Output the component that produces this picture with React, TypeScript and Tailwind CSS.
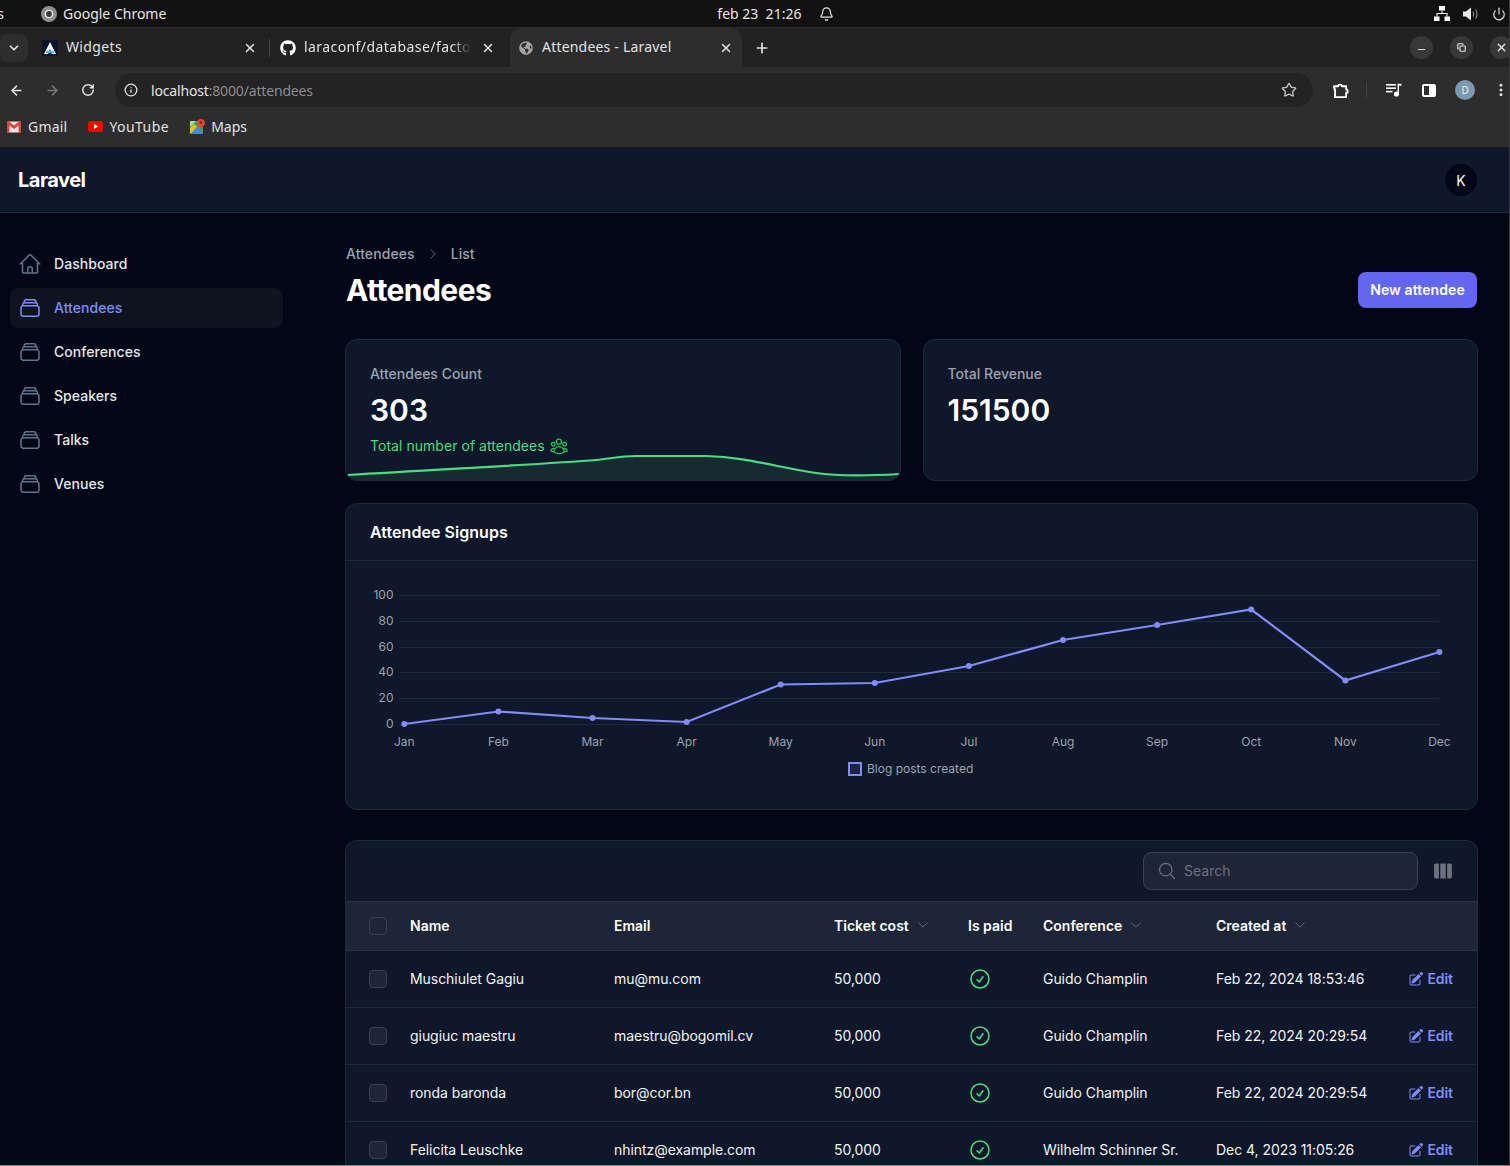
import React from "react";
import { HiOutlineHome, HiOutlineRectangleStack, HiOutlineUserGroup, HiOutlineCheckCircle, HiPencilSquare, HiViewColumns, HiOutlineMagnifyingGlass, HiOutlineChevronDown, HiOutlineChevronRight } from "react-icons/hi2";
import { FaGithub, FaGlobeAmericas } from "react-icons/fa";
import { ArrowLeft, ArrowRight, RotateCw, Info, Star, EllipsisVertical, X, Plus, ChevronDown, Minus, Copy, Power, Bell } from "lucide-react";

const nav = ["Dashboard", "Attendees", "Conferences", "Speakers", "Talks", "Venues"];
const rows = [
  ["Muschiulet Gagiu", "mu@mu.com", "Guido Champlin", "Feb 22, 2024 18:53:46"],
  ["giugiuc maestru", "maestru@bogomil.cv", "Guido Champlin", "Feb 22, 2024 20:29:54"],
  ["ronda baronda", "bor@cor.bn", "Guido Champlin", "Feb 22, 2024 20:29:54"],
  ["Felicita Leuschke", "nhintz@example.com", "Wilhelm Schinner Sr.", "Dec 4, 2023 11:05:26"],
];
const months = ["Jan", "Feb", "Mar", "Apr", "May", "Jun", "Jul", "Aug", "Sep", "Oct", "Nov", "Dec"];
const ys = [163, 150.5, 157, 161, 123.5, 122, 105, 79, 64, 48.5, 119.5, 91];
const ticks: [string, number][] = [["100", 34], ["80", 60], ["60", 86], ["40", 111], ["20", 137], ["0", 163]];
const xOf = (i: number) => 58.3 + i * 94.1;

function Chart() {
  const pts = ys.map((y, i) => `${xOf(i)},${y}`).join(" ");
  return (
    <svg width="1131" height="249" viewBox="0 0 1131 249" className="block">
      {ticks.map(([t, y]) => (
        <g key={t}>
          <line x1="53" x2="1093" y1={y + 0.5} y2={y + 0.5} stroke="#1e293b" />
          <text x="47.5" y={y + 4} textAnchor="end" fontSize="12" fill="#9ca3af">{t}</text>
        </g>
      ))}
      <polyline points={pts} fill="none" stroke="#818cf8" strokeWidth="2.2" />
      {ys.map((y, i) => <circle key={i} cx={xOf(i)} cy={y} r="3" fill="#818cf8" />)}
      {months.map((m, i) => (
        <text key={m} x={xOf(i)} y="185" textAnchor="middle" fontSize="12" fill="#9ca3af">{m}</text>
      ))}
      <rect x="503" y="202" width="12" height="12" fill="#1e2547" stroke="#818cf8" strokeWidth="2" />
      <text x="521" y="212" fontSize="12" fill="#9ca3af">Blog posts created</text>
    </svg>
  );
}

function Spark() {
  const d = "M2 136 C 100 130, 200 125, 250 121 C 265 119.5, 275 117, 290 117 L 360 117 C 400 118, 430 128, 470 134 C 490 137, 520 137, 553 135";
  return (
    <svg width="556" height="30" viewBox="0 0 556 30" preserveAspectRatio="none" className="absolute left-0 bottom-0">
      <g transform="translate(0,-111)">
        <path d={d + " L 553 141 L 2 141 Z"} fill="#172a32" />
        <path d={d} fill="none" stroke="#4ade80" strokeWidth="2.2" />
      </g>
    </svg>
  );
}

function Check() {
  return <span className="block w-[18px] h-[18px] rounded-[4px] bg-[#1e2536] border border-[#374151]" />;
}

function Sort({ label }: { label: string }) {
  return (
    <span className="inline-flex items-center gap-[7px]">
      {label}
      <HiOutlineChevronDown className="w-[14px] h-[14px] text-[#6b7280]" />
    </span>
  );
}

function MapsIcon() {
  return (
    <svg width="15" height="15" viewBox="0 0 15 15" className="block">
      <rect x="0" y="2" width="13" height="13" fill="#34a853" />
      <path d="M0 15 L7 8 L13 14 V15 Z" fill="#4285f4" />
      <path d="M0 15 L7 8 L4 5 L0 9 Z" fill="#fbbc04" />
      <path d="M0 2 H6 L0 8 Z" fill="#a8dab5" />
      <path d="M11 0 C13.2 0 15 1.6 15 3.6 C15 6 12.4 7.6 11 10 C9.6 7.6 7 6 7 3.6 C7 1.6 8.8 0 11 0 Z" fill="#ea4335" />
      <circle cx="11" cy="3.6" r="1.3" fill="#7b1c14" />
    </svg>
  );
}

function GmailIcon() {
  return (
    <svg width="14" height="12" viewBox="0 0 14 12" className="block">
      <rect x="0" y="0.5" width="14" height="11" rx="1" fill="#e8e4e2" />
      <path d="M0 1.5 C0 0.5 1 0 2 0.6 L7 4.6 L12 0.6 C13 0 14 0.5 14 1.5 V11 C14 11.5 13.6 12 13 12 H11.6 V4.4 L7 8 L2.4 4.4 V12 H1 C0.4 12 0 11.5 0 11 Z" fill="#d9473b" />
    </svg>
  );
}

function YoutubeIcon() {
  return (
    <svg width="15" height="11" viewBox="0 0 15 11" className="block">
      <rect width="15" height="11" rx="2.6" fill="#f00" />
      <path d="M6 3 L10 5.5 L6 8 Z" fill="#fff" />
    </svg>
  );
}

function NetworkIcon() {
  return (
    <svg width="16" height="15" viewBox="0 0 16 15" className="block" fill="#fff">
      <rect x="5" y="0" width="6" height="4.5" />
      <rect x="0" y="10.5" width="5.5" height="4.5" />
      <rect x="10.5" y="10.5" width="5.5" height="4.5" />
      <path d="M7.5 4.5 H8.5 V7 H13.5 V10.5 H12.5 V8 H3.5 V10.5 H2.5 V7 H7.5 Z" />
    </svg>
  );
}

function SpeakerIcon() {
  return (
    <svg width="16" height="14" viewBox="0 0 16 14" className="block" fill="none">
      <path d="M0 4.5 H3 L8 0.5 V13.5 L3 9.5 H0 Z" fill="#e8e8e8" />
      <path d="M10 4.5 C11 6 11 8 10 9.5 M12.5 2.5 C14.5 5 14.5 9 12.5 11.5" stroke="#8f8f8f" strokeWidth="1.1" />
    </svg>
  );
}

function ChromeDisc() {
  return (
    <svg width="16" height="16" viewBox="0 0 16 16" className="block ml-[41px]">
      <circle cx="8" cy="8" r="8" fill="#8e8e8e" />
      <circle cx="8" cy="8" r="3.6" fill="#3a3a3a" stroke="#f0f0f0" strokeWidth="1.4" />
    </svg>
  );
}

function ExtensionIcon() {
  return (
    <svg width="17" height="17" viewBox="0 0 18 18" className="block ml-[19px]" fill="none" stroke="#fff" strokeWidth="2" strokeLinejoin="round">
      <path d="M2 4.5 H6.5 C6.2 2.2 10.8 2.2 10.5 4.5 H15 V8 C17.2 8 17.2 11.5 15 11.5 V16 H3 C3.5 13 3.5 8 2 4.5 Z" />
    </svg>
  );
}

function QueueIcon() {
  return (
    <svg width="16" height="14" viewBox="0 0 16 14" className="block ml-[19px]" fill="#fff">
      <rect x="0" y="1" width="10" height="1.6" />
      <rect x="0" y="4.4" width="10" height="1.6" />
      <rect x="0" y="7.8" width="6.5" height="1.6" />
      <circle cx="10.5" cy="11" r="2.6" />
      <path d="M11.6 11 V0.8 H15.5 V2.8 H13 V11 Z" />
    </svg>
  );
}

function ChromeBar() {
  return (
    <div className="shrink-0 font-['Noto_Sans',sans-serif]">
      <div className="h-[27px] bg-[#111111] text-[#e8e8e8] text-[14px] relative flex items-center">
        <span className="absolute left-0 w-[4px] overflow-hidden whitespace-nowrap flex justify-end">s</span>
        <ChromeDisc />
        <span className="ml-[6px]">Google Chrome</span>
        <span className="ml-[551px]">feb 23&nbsp; 21:26</span>
        <Bell className="ml-[18px] w-[15px] h-[16px]" />
        <div className="ml-auto flex items-center gap-[13px] pr-[3px]">
          <NetworkIcon />
          <SpeakerIcon />
          <Power className="w-[14px] h-[14px]" />
        </div>
      </div>
      <div className="h-[40px] bg-[#222222] flex items-center text-[14px] text-[#e3e3e3] border-t border-[#2e2e2e]">
        <div className="w-[28px] h-[28px] bg-[#2e2e2e] rounded-lg flex items-center justify-center">
          <ChevronDown className="w-[14px] h-[14px]" strokeWidth={3} />
        </div>
        <svg width="16" height="16" viewBox="0 0 16 16" className="ml-[14px] bg-[#0a1530]">
          <path d="M8 2 L14 14 H10 L8 9 L6 14 H2 Z" fill="#f0f4ff" />
          <path d="M4 11 H12 V13 H4 Z" fill="#38bdf8" />
        </svg>
        <span className="ml-[8px] w-[175px] tracking-[0.35px] pb-[2px]">Widgets</span>
        <X className="w-[14px] h-[14px] ml-[2px]" strokeWidth={2.5} />
        <span className="w-px h-[18px] bg-[#444] ml-[12px]" />
        <FaGithub className="ml-[10px] w-[16px] h-[16px] text-white" />
        <span className="ml-[8px] w-[172px] tracking-[0.42px] pb-[2px] whitespace-nowrap [mask-image:linear-gradient(90deg,black_86%,transparent_97%)]">laraconf/database/facto</span>
        <X className="w-[14px] h-[14px] ml-[5px]" strokeWidth={2.5} />
        <div className="ml-[15px] w-[232px] h-[40px] bg-[#2d2d2d] rounded-t-xl flex items-center">
          <FaGlobeAmericas className="ml-[9px] w-[14px] h-[14px] text-[#a5a5a5]" />
          <span className="ml-[9px] w-[175px] pb-[2px] tracking-[0.2px]">Attendees - Laravel</span>
          <X className="w-[14px] h-[14px] ml-[2px]" strokeWidth={2.5} />
        </div>
        <Plus className="ml-[12px] w-[16px] h-[16px]" strokeWidth={2.5} />
        <div className="ml-auto flex items-center gap-[17px] mr-[-4px]">
          <span className="w-[23px] h-[23px] rounded-full bg-[#383838] flex items-center justify-center"><Minus className="w-[11px] h-[11px] mt-[3px]" /></span>
          <span className="w-[23px] h-[23px] rounded-full bg-[#383838] flex items-center justify-center"><Copy className="w-[9px] h-[9px]" strokeWidth={3} /></span>
          <span className="w-[23px] h-[23px] rounded-full bg-[#383838] flex items-center justify-center"><X className="w-[13px] h-[13px]" strokeWidth={2.5} /></span>
        </div>
      </div>
      <div className="h-[40px] pt-[6px] bg-[#2d2d2d] flex items-center text-[#e3e3e3]">
        <ArrowLeft className="ml-[9px] w-[15px] h-[15px]" strokeWidth={2.5} />
        <ArrowRight className="ml-[21px] w-[15px] h-[15px] text-[#777]" strokeWidth={2.5} />
        <RotateCw className="ml-[21px] w-[14px] h-[14px]" strokeWidth={2.5} />
        <div className="ml-[20px] w-[1200px] h-[34px] rounded-full bg-[#232323] flex items-center text-[14px]">
          <Info className="ml-[9px] w-[14px] h-[14px]" strokeWidth={2.2} />
          <span className="ml-[13px] tracking-[-0.16px]">localhost<span className="text-[#8d8d8d]">:8000/attendees</span></span>
          <Star className="ml-auto mr-[16px] w-[16px] h-[16px] text-[#c4c4c4]" strokeWidth={2} />
        </div>
        <ExtensionIcon />
        <span className="ml-[17px] w-px h-[16px] bg-[#444]" />
        <QueueIcon />
        <span className="ml-[20px] w-[14px] h-[13px] rounded-[2px] border-2 border-white bg-[linear-gradient(90deg,transparent_50%,white_50%)]" />
        <span className="ml-[19px] w-[20px] h-[20px] rounded-full bg-[#7b9aad] text-[10px] text-[#e8eef2] flex items-center justify-center">D</span>
        <EllipsisVertical className="ml-[18px] w-[16px] h-[16px]" strokeWidth={2.5} />
      </div>
      <div className="h-[41px] bg-[#2d2d2d] flex items-center text-[14px] text-[#e3e3e3] pb-[1px] border-b border-[#1a1a1a]">
        <span className="ml-[7px]"><GmailIcon /></span>
        <span className="ml-[7px] tracking-[0.2px]">Gmail</span>
        <span className="ml-[21px]"><YoutubeIcon /></span>
        <span className="ml-[6px] tracking-[0.45px]">YouTube</span>
        <span className="ml-[21px]"><MapsIcon /></span>
        <span className="ml-[6px]">Maps</span>
      </div>
    </div>
  );
}

const textCell = "pb-[2px]";

export default function App() {
  return (
    <div className="w-[1510px] h-[1166px] overflow-hidden flex flex-col bg-[#020617] font-['Inter',sans-serif] text-white border-r border-b border-r-[#3a3a3a] border-b-[#d9606a]">
      <ChromeBar />
      <header className="shrink-0 h-[65px] bg-[#0f172a] border-b border-[#1e293b] flex items-center justify-between pl-[18px] pr-[32px]">
        <span className="text-[20px] font-bold tracking-[-0.5px]">Laravel</span>
        <span className="w-[32px] h-[32px] rounded-full bg-[#020617] text-[14px] flex items-center justify-center">K</span>
      </header>
      <div className="flex-1 flex min-h-0">
        <aside className="w-[293px] shrink-0 pl-[10px] pr-[10px] pt-[31px]">
          <ul className="flex flex-col gap-[4px]">
            {nav.map((n) => {
              const active = n === "Attendees";
              const Icon = n === "Dashboard" ? HiOutlineHome : HiOutlineRectangleStack;
              return (
                <li key={n} className={`h-[40px] rounded-lg flex items-center pl-[10px] gap-[12px] text-[14px] font-medium ${active ? "bg-[#0f1320] text-[#818cf8]" : "text-[#e5e7eb]"}`}>
                  <Icon className={`w-[24px] h-[24px] -ml-[2px] ${active ? "text-[#818cf8]" : "text-[#64748b]"}`} />
                  <span className="pb-[2px] tracking-[0.05px]">{n}</span>
                </li>
              );
            })}
          </ul>
        </aside>
        <main className="w-[1133px] ml-[52px] shrink-0 pt-[32px]">
          <div className="flex items-start justify-between h-[66px]">
            <div>
              <div className="flex items-center text-[14px] leading-[18px] font-medium text-[#9ca3af] h-[18px] ml-[1px] tracking-[0.08px]">
                <span>Attendees</span>
                <HiOutlineChevronRight className="w-[14px] h-[14px] mx-[11px] text-[#6b7280]" />
                <span>List</span>
              </div>
              <h1 className="text-[30px] leading-[36px] font-bold tracking-[-0.55px] mt-[9px] ml-[1px]">Attendees</h1>
            </div>
            <button className="w-[119px] h-[36px] rounded-lg bg-[#6366f1] text-[14px] font-semibold mt-[27px] mr-[1px] pb-[2px] tracking-[0.1px]">New attendee</button>
          </div>
          <div className="grid grid-cols-2 gap-[22px] mt-[28px]">
            {[0, 1].map((i) => (
              <div key={i} className="relative h-[142px] rounded-xl bg-[#0f172a] border border-[#1e293b] overflow-hidden pl-[24px] pt-[24px]">
                <div className="text-[14px] leading-[20px] font-medium text-[#9ca3af]">{i === 0 ? "Attendees Count" : "Total Revenue"}</div>
                <div className="text-[30px] leading-[36px] font-semibold mt-[8px]">{i === 0 ? "303" : "151500"}</div>
                {i === 0 && (
                  <>
                    <div className="flex items-center gap-[4px] text-[14px] leading-[20px] tracking-[0.04px] text-[#4ade80] mt-[8px]">
                      Total number of attendees <HiOutlineUserGroup className="w-[20px] h-[20px] text-[#22c55e]" />
                    </div>
                    <Spark />
                  </>
                )}
              </div>
            ))}
          </div>
          <section className="mt-[22px] h-[307px] rounded-xl bg-[#0f172a] border border-[#1e293b] overflow-hidden">
            <div className="h-[57px] border-b border-[#1e293b] flex items-center pl-[24px] text-[16px] font-semibold tracking-[0.05px]">Attendee Signups</div>
            <Chart />
          </section>
          <section className="mt-[30px] rounded-t-xl bg-[#0f172a] border border-b-0 border-[#1e293b] h-[400px] overflow-hidden">
            <div className="h-[60px] flex items-center justify-end pr-[24px]">
              <div className="w-[275px] h-[38px] rounded-lg bg-[#1e2536] border border-[#374151] flex items-center pl-[13px] gap-[7px] text-[14px] text-[#6b7280]">
                <HiOutlineMagnifyingGlass className="w-[20px] h-[20px] text-[#6b7280]" />
                <span className="pb-[2px]">Search</span>
              </div>
              <HiViewColumns className="ml-[14px] mr-[-1px] w-[22px] h-[22px] text-[#6b7280]" />
            </div>
            <table className="w-full table-fixed border-collapse text-[14px] text-left">
              <colgroup>
                <col className="w-[64px]" />
                <col className="w-[204px]" />
                <col className="w-[220px]" />
                <col className="w-[134px]" />
                <col className="w-[75px]" />
                <col className="w-[173px]" />
                <col className="w-[184px]" />
                <col />
              </colgroup>
              <thead>
                <tr className="h-[49px] bg-[#1e2536] border-y border-[#273244] font-semibold">
                  <th className="pl-[23px]"><Check /></th>
                  <th className="font-semibold pb-[2px]">Name</th>
                  <th className="font-semibold pb-[2px]">Email</th>
                  <th className="font-semibold pb-[2px]"><Sort label="Ticket cost" /></th>
                  <th className="font-semibold pb-[2px]">Is paid</th>
                  <th className="font-semibold pb-[2px]"><Sort label="Conference" /></th>
                  <th className="font-semibold pb-[2px]"><Sort label="Created at" /></th>
                  <th />
                </tr>
              </thead>
              <tbody>
                {rows.map((r) => (
                  <tr key={r[1]} className="h-[57px] border-b border-[#1e293b] text-[#f3f4f6] tracking-[-0.05px]">
                    <td className="pl-[23px]"><Check /></td>
                    <td className={textCell}>{r[0]}</td>
                    <td className={textCell}>{r[1]}</td>
                    <td className={textCell}>50,000</td>
                    <td><HiOutlineCheckCircle className="w-[24px] h-[24px] text-[#4ade80]" /></td>
                    <td className={textCell}>{r[2]}</td>
                    <td className="pb-[2px] whitespace-nowrap">{r[3]}</td>
                    <td>
                      <span className="flex items-center justify-end gap-[3px] pr-[24px] text-[#818cf8] font-semibold">
                        <HiPencilSquare className="w-[16px] h-[16px]" /><span className="pb-[2px]">Edit</span>
                      </span>
                    </td>
                  </tr>
                ))}
              </tbody>
            </table>
          </section>
        </main>
      </div>
    </div>
  );
}
